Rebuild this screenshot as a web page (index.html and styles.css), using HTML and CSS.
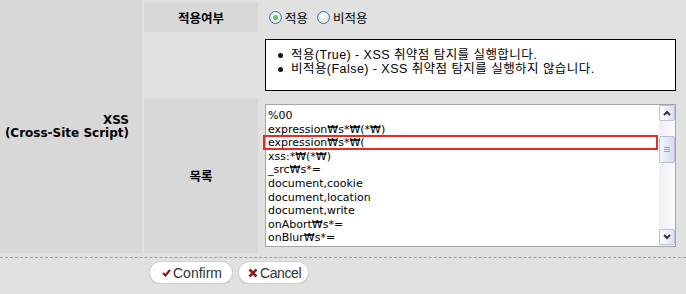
FILE: index.html
```html
<!DOCTYPE html>
<html>

<head>
    <title>XSS Settings</title>

    <link rel="stylesheet" href="styles.css">
</head>

<body>
    <div class="form">
        <div class="group">XSS<br>(Cross-Site Script)</div>

        <div class="rows">
            <div class="label">적용여부</div>
            <div class="value choice">
                <label class="radio"><span class="dot checked"></span>적용</label>
                <label class="radio"><span class="dot"></span>비적용</label>
            </div>

            <div class="label empty"></div>
            <div class="value">
                <ul class="notice">
                    <li>적용(True) - XSS 취약점 탐지를 실행합니다.</li>
                    <li>비적용(False) - XSS 취약점 탐지를 실행하지 않습니다.</li>
                </ul>
            </div>

            <div class="label tall">목록</div>
            <div class="value">
                <div class="listbox">
                    <div class="lines">
                        <div>%00</div>
                        <div>expression₩s*₩(*₩)</div>
                        <div>expression₩s*₩(</div>
                        <div>xss:*₩(*₩)</div>
                        <div>_src₩s*=</div>
                        <div>document,cookie</div>
                        <div>document,location</div>
                        <div>document,write</div>
                        <div>onAbort₩s*=</div>
                        <div>onBlur₩s*=</div>
                    </div>
                    <div class="scrollbar">
                        <div class="sb-btn">
                            <svg width="8" height="6" viewBox="0 0 8 6"><polyline points="1,5 4,2 7,5" fill="none" stroke="#333" stroke-width="2"/></svg>
                        </div>
                        <div class="sb-track">
                            <div class="sb-thumb"><span></span><span></span><span></span></div>
                        </div>
                        <div class="sb-btn">
                            <svg width="8" height="6" viewBox="0 0 8 6"><polyline points="1,1 4,4 7,1" fill="none" stroke="#333" stroke-width="2"/></svg>
                        </div>
                    </div>
                    <div class="selected"></div>
                </div>
            </div>
        </div>
    </div>

    <div class="actions">
        <button class="btn">
            <svg width="9" height="8" viewBox="0 0 9 8"><polyline points="1,4 3.5,6.5 8,1" fill="none" stroke="#8b1a1a" stroke-width="2.2"/></svg>
            Confirm
        </button>
        <button class="btn cancel">
            <svg width="10" height="10" viewBox="0 0 10 10"><path d="M1.5 1.5 L8.5 8.5 M8.5 1.5 L1.5 8.5" stroke="#8b1a1a" stroke-width="2.6"/></svg>
            Cancel
        </button>
    </div>
</body>

</html>
```

FILE: styles.css
```css
body {
    margin: 0;
    background-color: #e1e1e1;
    color: #000;
    font-family: "Liberation Sans", "Noto Sans CJK KR", sans-serif;
    font-size: 12px;
}

.form {
    display: flex;
    gap: 2px;
}

.group {
    width: 130px;
    height: 253px;
    padding-right: 13px;
    background-color: #d8d8d8;
    display: flex;
    align-items: center;
    justify-content: flex-end;
    text-align: right;
    font-family: "DejaVu Sans", sans-serif;
    font-weight: bold;
    line-height: 13px;
}

.rows {
    flex: 1;
    padding-top: 2px;
    display: grid;
    grid-template-columns: 114px 1fr;
    grid-template-rows: 30px 62px 155px;
    row-gap: 2px;
}

.label {
    background-color: #d8d8d8;
    display: flex;
    align-items: center;
    justify-content: center;
    font-family: "Noto Sans CJK KR", sans-serif;
    font-weight: bold;
    font-size: 12.5px;
}

.label.empty {
    background-color: transparent;
}

.value {
    padding: 5px 10px 0 7px;
}

/* radio buttons */
.choice {
    padding-top: 0;
    display: flex;
    align-items: center;
    gap: 9px;
    padding-left: 11px;
}

.radio {
    display: flex;
    align-items: center;
    gap: 3px;
    font-family: "Noto Sans CJK KR", sans-serif;
    font-size: 12.5px;
}

.dot {
    width: 11px;
    height: 11px;
    border: 1px solid #3a6ea5;
    border-radius: 50%;
    background: radial-gradient(circle at 40% 40%, #ffffff, #dcdcd6);
    position: relative;
}

.dot.checked::after {
    content: "";
    position: absolute;
    left: 3px;
    top: 3px;
    width: 5px;
    height: 5px;
    border-radius: 50%;
    background: radial-gradient(circle at 40% 40%, #7ee07e, #21a121);
}

/* notice box */
.notice {
    margin: 0;
    height: 36px;
    padding: 8px 0 6px 25px;
    list-style: none;
    background-color: #fff;
    border: 1px solid #000;
    font-size: 12.5px;
    letter-spacing: 0.45px;
    line-height: 14px;
}

.notice li {
    position: relative;
}

.notice li::before {
    content: "";
    position: absolute;
    left: -13px;
    top: 5px;
    width: 5px;
    height: 5px;
    border-radius: 50%;
    background-color: #111133;
}

/* list box */
.listbox {
    margin-top: 1px;
    width: 409px;
    height: 141px;
    border: 1px solid #a5a5a5;
    background-color: #fff;
    display: flex;
    position: relative;
}

.lines {
    flex: 1;
    overflow: hidden;
    padding: 4px 0 0 2px;
    font-family: "DejaVu Sans", sans-serif;
    font-size: 11px;
    line-height: 13.6px;
    white-space: nowrap;
}

.selected {
    position: absolute;
    left: -3px;
    top: 30px;
    width: 391px;
    height: 11px;
    border: 2px solid #e52a2a;
}

.scrollbar {
    width: 16px;
    display: flex;
    flex-direction: column;
    background: linear-gradient(to right, #eeeef5, #fbfbfd);
}

.sb-btn {
    height: 14px;
    margin: 0 0 1px;
    border: 1px solid #b8c2d8;
    border-radius: 2px;
    background: linear-gradient(to right, #ffffff, #dde2f0);
    display: flex;
    align-items: center;
    justify-content: center;
}

.sb-track {
    flex: 1;
    padding-top: 14px;
}

.sb-thumb {
    height: 25px;
    border: 1px solid #b5bed6;
    border-radius: 2px;
    background: linear-gradient(to right, #f4f5fc, #d5daee);
    display: flex;
    flex-direction: column;
    align-items: center;
    justify-content: center;
    gap: 1px;
}

.sb-thumb span {
    width: 6px;
    height: 1px;
    background-color: #9aa3bd;
}

/* buttons */
.actions {
    margin-top: 4px;
    border-top: 1px dashed #a0a0a0;
    padding: 3px 0 0 149px;
    display: flex;
    gap: 5px;
}

.btn {
    height: 23px;
    padding: 0 10px 0 12px;
    background-color: #fff;
    border: 1px solid #d0d0d0;
    border-radius: 12px;
    box-shadow: 0 1px 1px rgba(0, 0, 0, 0.08);
    display: flex;
    align-items: center;
    gap: 2px;
    font-family: "Liberation Sans", sans-serif;
    font-size: 14px;
    color: #333;
}

.btn.cancel {
    padding: 0 7px 0 9px;
    letter-spacing: -0.4px;
}
```
